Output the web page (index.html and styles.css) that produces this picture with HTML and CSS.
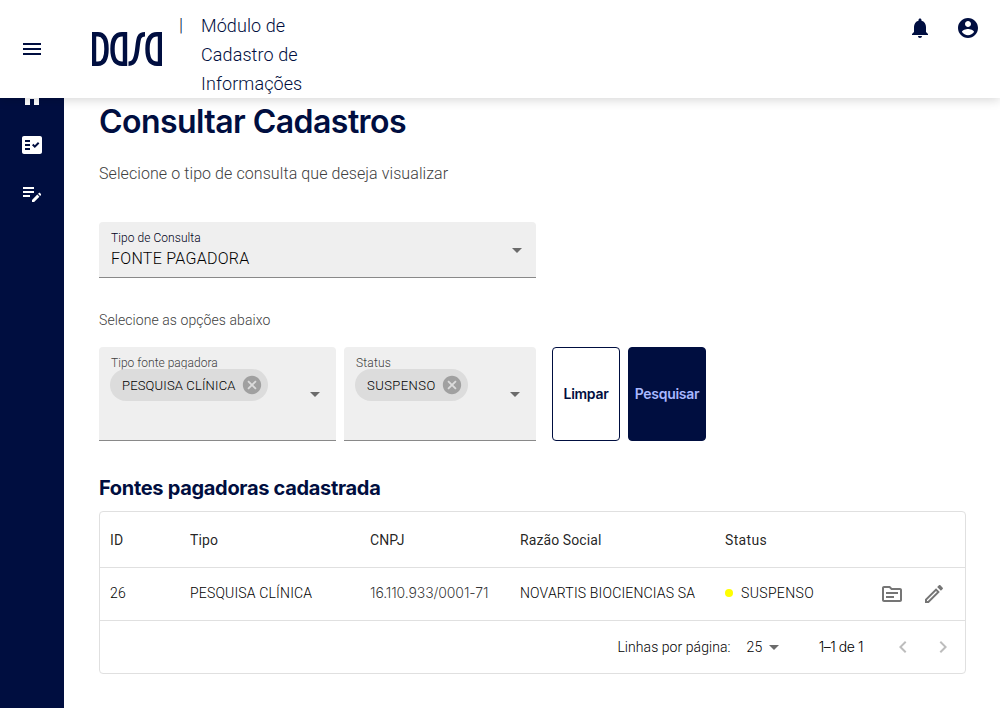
FILE: index.html
```html
<!DOCTYPE html>
<html lang="pt-BR">
<head>
<meta charset="utf-8">
<title>Consultar Cadastros</title>
<link rel="stylesheet" href="styles.css">
</head>
<body>
<header class="topbar">
  <svg class="icon menu" viewBox="0 0 24 24"><path d="M3 18h18v-2H3v2zm0-5h18v-2H3v2zm0-7v2h18V6H3z"/></svg>
  <svg class="logo" viewBox="0 0 70 34" aria-label="Dasa">
    <path d="M2 2.300H6C12 2.300 14.500 8 14.500 17S12 31.700 6 31.700H2Z"/>
    <path d="M33 2.300H30C23 2.300 20.500 8 20.500 17S23 31.700 30 31.700H33Z"/>
    <path d="M53 2.300C47 2.300 46.500 6 45.500 15C44.500 25 43 31.700 36.500 31.700"/>
    <path d="M68 2.300H65C58 2.300 55.500 8 55.500 17S58 31.700 65 31.700H68Z"/>
  </svg>
  <span class="divider">|</span>
  <div class="module">Módulo de Cadastro de Informações</div>
  <div class="actions">
    <svg class="icon" viewBox="0 0 24 24"><path d="M12 22c1.100 0 2-.9 2-2h-4c0 1.100.89 2 2 2zm6-6v-5c0-3.070-1.640-5.640-4.500-6.320V4c0-.83-.67-1.500-1.500-1.500s-1.500.67-1.500 1.500v.68C7.630 5.360 6 7.920 6 11v5l-2 2v1h16v-1l-2-2z"/></svg>
    <svg class="icon" viewBox="0 0 24 24"><path d="M12 2C6.480 2 2 6.480 2 12s4.480 10 10 10 10-4.480 10-10S17.520 2 12 2zm0 3c1.660 0 3 1.340 3 3s-1.340 3-3 3-3-1.340-3-3 1.340-3 3-3zm0 14.200c-2.500 0-4.710-1.280-6-3.220.03-1.990 4-3.080 6-3.080 1.990 0 5.970 1.090 6 3.080-1.290 1.940-3.500 3.220-6 3.220z"/></svg>
  </div>
</header>
<div class="body">
  <nav class="sidebar">
    <svg class="icon" viewBox="0 0 24 24"><path d="M10 20v-6h4v6h5v-8h3L12 3 2 12h3v8z"/></svg>
    <svg class="icon" viewBox="0 0 24 24"><path fill-rule="evenodd" d="M20 3H4c-1.100 0-2 .9-2 2v14c0 1.100.9 2 2 2h16c1.100 0 2-.9 2-2V5c0-1.100-.9-2-2-2zM10 17H5v-2h5v2zm0-4H5v-2h5v2zm0-4H5V7h5v2zm4.820 6L12 12.160l1.410-1.410 1.410 1.420L17.990 9l1.420 1.420L14.820 15z"/></svg>
    <svg class="icon" viewBox="0 0 24 24"><path d="M3 10h11v2H3v-2zm0-2h11V6H3v2zm0 8h7v-2H3v2zm15.010-3.130.71-.71c.39-.39 1.020-.39 1.410 0l.71.71c.39.39.39 1.020 0 1.410l-.71.710-2.120-2.120zm-.71.710-5.300 5.300V21h2.120l5.300-5.300-2.120-2.120z"/></svg>
  </nav>
  <main class="content">
    <h1>Consultar Cadastros</h1>
    <p class="lead">Selecione o tipo de consulta que deseja visualizar</p>
    <div class="field single">
      <div class="label dark">Tipo de Consulta</div>
      <div class="value">FONTE PAGADORA</div>
      <svg class="arrow" viewBox="0 0 10 5"><path d="M0 0h10L5 5z"/></svg>
    </div>
    <p class="hint">Selecione as opções abaixo</p>
    <div class="filters">
      <div class="field multi payer">
        <div class="label">Tipo fonte pagadora</div>
        <div class="chip"><span>PESQUISA CLÍNICA</span><svg viewBox="0 0 24 24"><path d="M12 2C6.470 2 2 6.470 2 12s4.470 10 10 10 10-4.470 10-10S17.530 2 12 2zm5 13.590L15.590 17 12 13.410 8.410 17 7 15.590 10.590 12 7 8.410 8.410 7 12 10.590 15.590 7 17 8.410 13.410 12 17 15.590z"/></svg></div>
        <svg class="arrow" viewBox="0 0 10 5"><path d="M0 0h10L5 5z"/></svg>
      </div>
      <div class="field multi state">
        <div class="label wide">Status</div>
        <div class="chip wide"><span>SUSPENSO</span><svg viewBox="0 0 24 24"><path d="M12 2C6.470 2 2 6.470 2 12s4.470 10 10 10 10-4.470 10-10S17.530 2 12 2zm5 13.590L15.590 17 12 13.410 8.410 17 7 15.590 10.590 12 7 8.410 8.410 7 12 10.590 15.590 7 17 8.410 13.410 12 17 15.590z"/></svg></div>
        <svg class="arrow" viewBox="0 0 10 5"><path d="M0 0h10L5 5z"/></svg>
      </div>
      <button class="btn outline">Limpar</button>
      <button class="btn solid">Pesquisar</button>
    </div>
    <h2>Fontes pagadoras cadastrada</h2>
    <section class="table">
      <div class="row head">
        <div>ID</div><div>Tipo</div><div>CNPJ</div><div>Razão Social</div><div class="wide">Status</div><div></div>
      </div>
      <div class="row data">
        <div>26</div><div>PESQUISA CLÍNICA</div><div class="num">16.110.933/0001-71</div><div>NOVARTIS BIOCIENCIAS SA</div>
        <div class="status wide"><i class="dot"></i>SUSPENSO</div>
        <div class="tools">
          <svg class="icon" viewBox="0 0 24 24"><path d="M20 6h-8l-2-2H4c-1.100 0-1.990.9-1.990 2L2 18c0 1.100.9 2 2 2h16c1.100 0 2-.9 2-2V8c0-1.100-.9-2-2-2zm0 12H4V6h5.170l2 2H20v10zm-2-6H6v-2h12v2zm-4 4H6v-2h8v2z"/></svg>
          <svg class="icon" viewBox="0 0 24 24"><path d="m14.060 9.020.92.920L5.920 19H5v-.92l9.060-9.060M17.660 3c-.25 0-.51.100-.7.290l-1.830 1.830 3.750 3.750 1.830-1.830c.39-.39.39-1.020 0-1.410l-2.340-2.340c-.2-.2-.45-.29-.71-.29zm-3.600 3.190L3 17.250V21h3.750L17.810 9.940l-3.750-3.750z"/></svg>
        </div>
      </div>
      <footer class="pager">
        <span class="per">Linhas por página:</span>
        <span class="size">25</span>
        <svg class="caret" viewBox="0 0 10 5"><path d="M0 0h10L5 5z"/></svg>
        <span class="range">1–1 de 1</span>
        <svg class="icon prev" viewBox="0 0 24 24"><path d="M15.410 7.410 14 6l-6 6 6 6 1.410-1.410L10.830 12z"/></svg>
        <svg class="icon next" viewBox="0 0 24 24"><path d="M10 6 8.590 7.410 13.170 12l-4.580 4.590L10 18l6-6z"/></svg>
      </footer>
    </section>
  </main>
</div>
</body>
</html>
```
FILE: styles.css
```css
* { box-sizing: border-box; }
body { margin: 0; height: 708px; overflow: hidden; display: flex; flex-direction: column; background: #fff; font-family: Roboto, "Liberation Sans", sans-serif; font-size: 14px; font-weight: 300; color: #000; }
h1, h2, p { margin: 0; }
.icon { width: 24px; height: 24px; fill: currentColor; flex: none; display: block; }

.topbar { height: 98px; flex: none; position: relative; z-index: 1; display: flex; align-items: flex-start; background: #fff; color: #000e40; box-shadow: 0 2px 10px rgba(0,0,0,.16); }
.menu { margin: 37px 0 0 20px; }
.logo { width: 70px; height: 34px; margin: 32px 0 0 48px; fill: none; stroke: #000e40; stroke-width: 4.4; flex: none; }
.divider { width: 39px; padding-left: 17px; margin-top: 10px; font-size: 18px; line-height: 29px; }
.module { width: 110px; margin-top: 11px; font-size: 18px; line-height: 29px; letter-spacing: .1px; }
.actions { margin: 16px 20px 0 auto; display: flex; gap: 24px; }

.body { flex: 1; min-height: 0; display: flex; }
.sidebar { width: 64px; flex: none; margin-top: -13px; background: #000e40; color: #fff; display: flex; flex-direction: column; align-items: center; gap: 24px; }
.content { flex: 1; padding: 5px 34px 0 35px; }

h1 { font: 630 32px/38px Inter, sans-serif; letter-spacing: -.55px; color: #000e40; }
.lead { margin-top: 21px; font-size: 16px; line-height: 24px; letter-spacing: .08px; color: #404040; }
.hint { margin-top: 32px; line-height: 20px; letter-spacing: .08px; color: #404040; }

.field { position: relative; background: #efefef; border-bottom: 1px solid #898989; border-radius: 4px 4px 0 0; padding: 9px 12px 0; }
.single { width: 437px; height: 56px; margin-top: 36px; }
.label { font-size: 12px; line-height: 14px; letter-spacing: .02px; color: #404040; }
.label.dark { color: #000220; letter-spacing: .06px; }
.label.wide { letter-spacing: .2px; }
.value { margin-top: 4px; font-size: 16px; line-height: 20px; letter-spacing: .28px; color: #000; }
.arrow { position: absolute; right: 14px; top: 26px; width: 10px; height: 5px; fill: #6b6b6b; }
.multi { height: 94px; }
.multi .arrow { right: 16px; top: 45px; }
.payer { width: 237px; }
.state { width: 192px; }
.chip { display: inline-flex; align-items: center; height: 32px; margin: -1px 0 0 -1px; padding: 0 5px 0 12px; border-radius: 16px; background: #dcdcdc; font-size: 13px; letter-spacing: .16px; color: #000; }
.chip.wide { letter-spacing: .45px; }
.chip svg { width: 22px; height: 22px; margin-left: 5px; fill: #a0a0a0; }
.filters { display: flex; gap: 8px; margin-top: 17px; }
.btn { height: 94px; padding: 0 0 2px; border: 1px solid #000e40; border-radius: 4px; font: 600 14px Inter, sans-serif; letter-spacing: -.28px; }
.outline { width: 68px; margin-left: 8px; background: #fff; color: #000e40; }
.solid { width: 78px; background: #000e40; color: #a9b8ff; }

h2 { margin-top: 34px; font: 650 20px/26px Inter, sans-serif; letter-spacing: -.31px; color: #000e40; }
.table { width: 867px; height: 163px; margin-top: 10px; border: 1px solid #e0e0e0; border-radius: 4px; }
.row { display: grid; grid-template-columns: 80px 180px 150px 205px 140px 1fr; align-items: center; padding-left: 10px; border-bottom: 1px solid #e0e0e0; }
.head { height: 56px; font-weight: 400; letter-spacing: .1px; color: rgba(0,0,0,.87); }
.data { height: 53px; letter-spacing: .17px; padding-bottom: 2px; color: #000; }
.num { font-family: Inter, sans-serif; letter-spacing: -.12px; line-height: 16px; padding-bottom: 1px; color: rgba(0,0,0,.8); }
.row .wide { letter-spacing: .36px; }
.status { display: flex; align-items: center; gap: 8px; }
.dot { width: 8px; height: 8px; border-radius: 50%; background: #ff0; }
.tools { display: flex; gap: 18px; padding: 2px 0 0 15px; color: #757575; }
.pager { height: 52px; display: flex; align-items: center; justify-content: flex-end; padding-right: 10px; }
.per { letter-spacing: .06px; }
.size { margin-left: 16px; letter-spacing: .3px; padding-bottom: 1px; }
.caret { width: 10px; height: 5px; margin: 1px 40px 0 6px; fill: #6b6b6b; }
.range { font-family: Inter, sans-serif; letter-spacing: -.45px; margin-right: 28px; padding-bottom: 2px; }
.prev, .next { color: #bdbdbd; }
.next { margin-left: 16px; }
```
